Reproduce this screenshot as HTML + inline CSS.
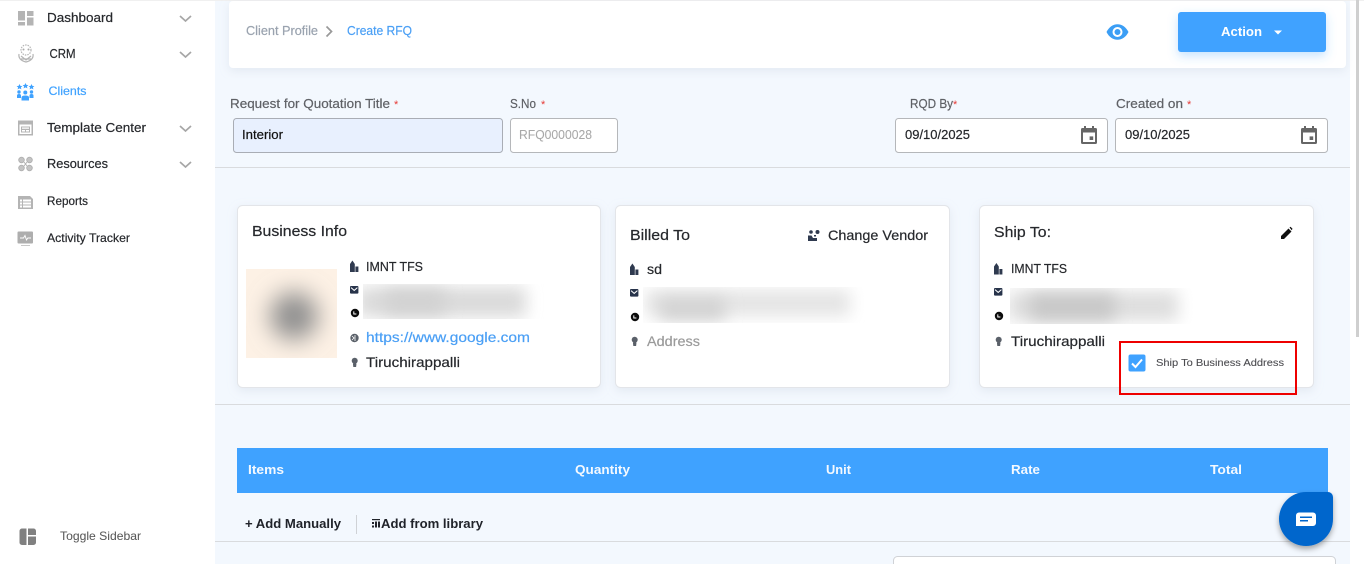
<!DOCTYPE html>
<html lang="en"><head><meta charset="utf-8"><title>Create RFQ</title>
<style>
html,body{margin:0;padding:0;width:1364px;height:564px;overflow:hidden;background:#fff}
svg{position:absolute;left:0;top:0;display:block}
text{font-family:"Liberation Sans",sans-serif;font-size:13px;color:#26282c;fill:currentColor;stroke:currentColor;stroke-width:.2px;white-space:pre}
.card{fill:#fff;stroke:#e3e5e9;stroke-width:1;filter:url(#sh)}
.inp{fill:#fff;stroke:#b5b7ba;stroke-width:1}
.lab{color:#5f6166;font-size:13px}
.st{color:#e53935;font-size:11px;stroke-width:0}
.th{color:#f4f9ff;font-weight:bold;font-size:13px;stroke-width:0}
</style></head><body>
<svg width="1364" height="564" viewBox="0 0 1364 564" xmlns="http://www.w3.org/2000/svg">
<defs>
<filter id="sh" x="-10%" y="-10%" width="120%" height="125%"><feDropShadow dx="0" dy="3" stdDeviation="5" flood-color="#a9b4c8" flood-opacity=".22"/></filter>
<filter id="shb" x="-10%" y="-30%" width="120%" height="170%"><feDropShadow dx="0" dy="4" stdDeviation="5" flood-color="#3fa2ff" flood-opacity=".3"/></filter>
<filter id="shc" x="-30%" y="-30%" width="160%" height="160%"><feDropShadow dx="0" dy="3" stdDeviation="3" flood-color="#000" flood-opacity=".35"/></filter>
<filter id="b6" x="-100%" y="-100%" width="300%" height="300%"><feGaussianBlur stdDeviation="12"/></filter>
<filter id="b7" x="-50%" y="-200%" width="200%" height="500%"><feGaussianBlur stdDeviation="8"/></filter>
<clipPath id="c1"><rect x="363" y="284" width="181" height="35"/></clipPath>
<clipPath id="c2"><rect x="643" y="287" width="222" height="36"/></clipPath>
<clipPath id="c3"><rect x="1010" y="288" width="183" height="36"/></clipPath>
<clipPath id="c4"><rect x="246" y="269" width="91" height="89"/></clipPath>
<g id="bld"><path d="M0 11.500V3.500L2.400 0 4.800 3.500V11.500ZM5.400 11.500V6H8.400V11.500Z" fill="#2f3a4f"/></g>
<g id="mail"><rect x="0" y="0" width="8.400" height="7.600" rx="1" fill="#27334a"/><path d="M1 1.600 4.200 4.400 7.400 1.600" stroke="#fff" stroke-width="1" fill="none"/></g>
<g id="ph"><circle cx="4" cy="4" r="4.200" fill="#0c0c0c"/><path d="M2.800 2.400V5H5.400" stroke="#fff" stroke-width="1" fill="none"/></g>
<g id="pin"><circle cx="3.200" cy="2.800" r="3" fill="#5a6069"/><path d="M1.400 5.500H5L4.600 9H1.800Z" fill="#5a6069"/></g>
<g id="cal"><path fill="#666" d="M3 0H5V2H11V0H13V2H14.500A1.500 1.500 0 0 1 16 3.500V16.500A1.500 1.500 0 0 1 14.500 18H1.500A1.500 1.500 0 0 1 0 16.500V3.500A1.500 1.500 0 0 1 1.500 2H3ZM2 6.500V16H14V6.500Z"/><rect x="8.600" y="10.400" width="3.600" height="3.600" fill="#666"/></g>
<path id="chev" d="M0 0 5.500 5 11 0" stroke="#a6a6a6" stroke-width="1.700" fill="none"/>
</defs>

<!-- main background -->
<rect x="215" y="0" width="1135" height="564" fill="#f3f8fe"/>
<rect x="0" y="0" width="1364" height="1" fill="#f0f0f0"/>
<rect x="1356" y="0" width="3" height="337" fill="#cfcfcf"/>

<!-- sidebar -->
<g>
<g fill="#b4b4b4"><rect x="18" y="11" width="7" height="9.500"/><rect x="27" y="11" width="6.500" height="5"/><rect x="18" y="22" width="7" height="3.500"/><rect x="27" y="17.500" width="6.500" height="8"/></g>
<text x="47" y="22" textLength="66" lengthAdjust="spacingAndGlyphs">Dashboard</text>
<use href="#chev" x="180" y="16"/>
<g fill="none" stroke="#b4b4b4" stroke-width="1.200"><circle cx="26" cy="50" r="5" stroke-dasharray="1.500 1"/><path d="M19 54Q18 60 26 62 34 60 33 54M21 56 26 60 31 56M21 59 31 59" /></g>
<circle cx="23.500" cy="49.500" r="1" fill="#aaa"/><circle cx="28.500" cy="49.500" r="1" fill="#aaa"/>
<text x="49.500" y="58" textLength="26" lengthAdjust="spacingAndGlyphs">CRM</text>
<use href="#chev" x="180" y="52"/>
<g fill="#3fa2ff"><path d="M19.500 84l.9 1.900 2 .2-1.500 1.300.5 2-1.900-1-1.900 1 .5-2-1.500-1.300 2-.2ZM25.500 83l.9 1.900 2 .2-1.500 1.300.5 2-1.900-1-1.900 1 .5-2-1.500-1.300 2-.2ZM31.500 84l.9 1.900 2 .2-1.500 1.300.5 2-1.900-1-1.900 1 .5-2-1.500-1.300 2-.2Z"/><circle cx="19" cy="92" r="1.700"/><circle cx="31.500" cy="92" r="1.700"/><circle cx="25.300" cy="92.500" r="2"/><path d="M17 98V95.500Q17 94 19 94T21 95.500V98ZM29.500 98V95.500Q29.500 94 31.500 94T33.500 95.500V98ZM21.500 100.500V97.500Q21.500 95.500 25.300 95.500T29 97.500V100.500Z"/></g>
<text x="48.500" y="95" textLength="38" lengthAdjust="spacingAndGlyphs" style="color:#3fa2ff;font-size:12px">Clients</text>
<path fill="#b4b4b4" fill-rule="evenodd" d="M18 120.500H33V135.500H18ZM19.500 124.500V134H31.500V124.500ZM21 126.500H30V132.500H21ZM22 127.500V128.800H29V127.500ZM22 130V131.500H25V130ZM26 130V131.500H29V130Z"/>
<text x="47" y="132" textLength="99" lengthAdjust="spacingAndGlyphs">Template Center</text>
<use href="#chev" x="180" y="126"/>
<g fill="#c4c4c4" stroke="#b0b0b0" stroke-width=".9"><circle cx="21.500" cy="160" r="2.800"/><circle cx="29.500" cy="160" r="2.800"/><circle cx="21.500" cy="168" r="2.800"/><circle cx="29.500" cy="168" r="2.800"/><path d="M24 162 27 166M27 162 24 166"/></g>
<text x="47" y="168" textLength="61" lengthAdjust="spacingAndGlyphs">Resources</text>
<use href="#chev" x="180" y="162"/>
<path fill="#b4b4b4" fill-rule="evenodd" d="M18 196H30L33 199V209H18ZM20 199.500V201.500H22V199.500ZM23 199.500V201.500H31V199.500ZM20 202.500V204.500H22V202.500ZM23 202.500V204.500H31V202.500ZM20 205.500V207.500H22V205.500ZM23 205.500V207.500H31V205.500Z"/>
<text x="47" y="205" textLength="41" lengthAdjust="spacingAndGlyphs" style="font-size:12px">Reports</text>
<rect x="17.500" y="231.500" width="15.500" height="12" rx="1" fill="#aeaeae"/><path d="M20 238H23.500L25 235.500 26.500 240 27.800 238H31" stroke="#fff" stroke-width=".9" fill="none"/><path d="M21 245.500H30" stroke="#c8c8c8" stroke-width="1"/>
<text x="47" y="242" textLength="83" lengthAdjust="spacingAndGlyphs" style="font-size:12px">Activity Tracker</text>
<path fill="#808080" d="M22 528.500H26.500V545H22A2.500 2.500 0 0 1 19.500 542.500V531A2.500 2.500 0 0 1 22 528.500ZM28 528.500H33.500A2.500 2.500 0 0 1 36 531V535H28ZM28 536.500H36V542.500A2.500 2.500 0 0 1 33.500 545H28Z"/>
<text x="60" y="540" textLength="81" lengthAdjust="spacingAndGlyphs" style="font-size:12px;color:#5a5a5a;stroke-width:.05px">Toggle Sidebar</text>
</g>

<!-- header card -->
<rect x="229" y="1" width="1117" height="67" rx="4" fill="#fff" filter="url(#sh)"/>
<text x="246" y="35" textLength="72" lengthAdjust="spacingAndGlyphs" style="color:#9aa3af">Client Profile</text>
<path d="M326.500 26.500 331.500 31.500 326.500 36.500" stroke="#999" stroke-width="1.700" fill="none"/>
<text x="347" y="35" textLength="65" lengthAdjust="spacingAndGlyphs" style="color:#4a9ff5">Create RFQ</text>
<path fill="#3b9ef5" fill-rule="evenodd" d="M1106.500 32C1109 27 1113 24.200 1117.500 24.200S1126 27 1128.500 32C1126 37 1122 39.800 1117.500 39.800S1109 37 1106.500 32ZM1117.500 27A5 5 0 1 0 1117.500 37 5 5 0 1 0 1117.500 27ZM1117.500 29A3 3 0 1 1 1117.500 35 3 3 0 1 1 1117.500 29Z"/>
<rect x="1178" y="12" width="148" height="40" rx="3" fill="#3fa2ff" filter="url(#shb)"/>
<text x="1221" y="36" textLength="41" lengthAdjust="spacingAndGlyphs" style="color:#fff;font-weight:bold;font-size:13px;stroke-width:0">Action</text>
<path d="M1274 30.500H1282L1278 34.500Z" fill="#fff"/>

<!-- form -->
<text class="lab" x="230" y="108" textLength="160" lengthAdjust="spacingAndGlyphs">Request for Quotation Title</text><text class="st" x="394" y="108">*</text>
<text class="lab" x="510" y="108" textLength="26" lengthAdjust="spacingAndGlyphs">S.No</text><text class="st" x="541" y="108">*</text>
<text class="lab" x="910" y="108" textLength="43" lengthAdjust="spacingAndGlyphs">RQD By</text><text class="st" x="953" y="108">*</text>
<text class="lab" x="1116" y="108" textLength="67" lengthAdjust="spacingAndGlyphs">Created on</text><text class="st" x="1187" y="108">*</text>
<rect x="233.500" y="118.500" width="269" height="34" rx="3" fill="#e8f0fe" stroke="#a9adb5"/>
<text x="242" y="139" textLength="41" lengthAdjust="spacingAndGlyphs" style="color:#111">Interior</text>
<rect class="inp" x="510.500" y="118.500" width="107" height="34" rx="3"/>
<text x="519" y="139" textLength="73" lengthAdjust="spacingAndGlyphs" style="color:#a8a8a8;stroke-width:.05px">RFQ0000028</text>
<rect class="inp" x="895.500" y="118.500" width="212" height="34" rx="3"/>
<text x="905" y="139" textLength="65" lengthAdjust="spacingAndGlyphs">09/10/2025</text>
<use href="#cal" x="1081" y="126"/>
<rect class="inp" x="1115.500" y="118.500" width="212" height="34" rx="3"/>
<text x="1125" y="139" textLength="65" lengthAdjust="spacingAndGlyphs">09/10/2025</text>
<use href="#cal" x="1301" y="126"/>
<rect x="215" y="167" width="1135" height="1" fill="#d9dbde"/>

<!-- card 1 -->
<rect class="card" x="237.500" y="205.500" width="363" height="182" rx="5"/>
<text x="252" y="236" textLength="95" lengthAdjust="spacingAndGlyphs" style="font-size:15px">Business Info</text>
<g clip-path="url(#c4)"><rect x="246" y="269" width="91" height="89" fill="#fdf1e5"/><circle cx="294" cy="316" r="24" fill="#8f8f8f" filter="url(#b6)"/></g>
<use href="#bld" x="350" y="260.500"/>
<text x="366" y="271" textLength="57" lengthAdjust="spacingAndGlyphs">IMNT TFS</text>
<use href="#mail" x="350" y="286"/>
<use href="#ph" x="351" y="309"/>
<g clip-path="url(#c1)"><rect x="363" y="284" width="181" height="35" fill="#fff"/><rect x="358" y="287" width="168" height="30" fill="#dadada" filter="url(#b7)"/><rect x="385" y="290" width="60" height="24" fill="#d2d2d2" filter="url(#b7)"/></g>
<circle cx="354.500" cy="338" r="4.200" fill="#5a6069"/><path d="M352 336 354 338 352 340M355 335V341" stroke="#fff" stroke-width=".8" fill="none"/>
<text x="366" y="342" textLength="164" lengthAdjust="spacingAndGlyphs" style="font-size:14px;color:#4a9ff5">https://www.google.com</text>
<use href="#pin" x="351.500" y="358"/>
<text x="366" y="367" textLength="94" lengthAdjust="spacingAndGlyphs" style="font-size:14px">Tiruchirappalli</text>

<!-- card 2 -->
<rect class="card" x="615.500" y="205.500" width="334" height="182" rx="5"/>
<text x="630" y="240" textLength="60" lengthAdjust="spacingAndGlyphs" style="font-size:15px">Billed To</text>
<g fill="#2f3a4f"><circle cx="811" cy="232" r="1.800"/><circle cx="817.500" cy="232" r="2"/><path d="M808 241V235.500H811.500L813 238H817V241Z"/><rect x="814" y="235" width="2" height="1.500"/></g>
<text x="828" y="240" textLength="100" lengthAdjust="spacingAndGlyphs" style="font-size:14px">Change Vendor</text>
<use href="#bld" x="630" y="263.500"/>
<text x="647" y="274" textLength="15" lengthAdjust="spacingAndGlyphs" style="font-size:14px">sd</text>
<use href="#mail" x="630" y="289"/>
<use href="#ph" x="631" y="313"/>
<g clip-path="url(#c2)"><rect x="643" y="287" width="222" height="36" fill="#fff"/><rect x="645" y="290" width="205" height="26" fill="#e4e4e4" filter="url(#b7)"/><rect x="660" y="298" width="65" height="22" fill="#d2d2d2" filter="url(#b7)"/></g>
<use href="#pin" x="631.500" y="337"/>
<text x="647" y="346" textLength="53" lengthAdjust="spacingAndGlyphs" style="font-size:14px;color:#9a9a9a">Address</text>

<!-- card 3 -->
<rect class="card" x="979.500" y="205.500" width="334" height="182" rx="5"/>
<text x="994" y="237" textLength="57" lengthAdjust="spacingAndGlyphs" style="font-size:15px">Ship To:</text>
<path d="M1281 239V236L1288.500 228.500 1291.500 231.500 1284 239ZM1289.500 227.500 1290.500 226.800 1292.500 228.800 1291.800 230.200Z" fill="#111"/>
<use href="#bld" x="994" y="263"/>
<text x="1011" y="273" textLength="56" lengthAdjust="spacingAndGlyphs">IMNT TFS</text>
<use href="#mail" x="994" y="288"/>
<use href="#ph" x="995" y="312"/>
<g clip-path="url(#c3)"><rect x="1010" y="288" width="183" height="36" fill="#fff"/><rect x="1008" y="291" width="170" height="30" fill="#dedede" filter="url(#b7)"/><rect x="1030" y="294" width="85" height="26" fill="#c8c8c8" filter="url(#b7)"/></g>
<use href="#pin" x="995.500" y="337"/>
<text x="1011" y="346" textLength="94" lengthAdjust="spacingAndGlyphs" style="font-size:14px">Tiruchirappalli</text>
<rect x="1120" y="342" width="176" height="52" fill="none" stroke="#ee0000" stroke-width="2"/>
<rect x="1128.500" y="354.500" width="17" height="17" rx="2" fill="#3fa2ff"/>
<path d="M1132 363.500 1135.500 367 1142 359.500" stroke="#fff" stroke-width="2" fill="none"/>
<text x="1156" y="366" textLength="128" lengthAdjust="spacingAndGlyphs" style="font-size:10.500px;color:#4c4c50;stroke-width:.1px">Ship To Business Address</text>

<rect x="215" y="404" width="1135" height="1" fill="#d9dbde"/>

<!-- table -->
<rect x="237" y="448" width="1091" height="45" fill="#3fa2ff"/>
<text class="th" x="248" y="474" textLength="36" lengthAdjust="spacingAndGlyphs">Items</text>
<text class="th" x="575" y="474" textLength="55" lengthAdjust="spacingAndGlyphs">Quantity</text>
<text class="th" x="826" y="474" textLength="25" lengthAdjust="spacingAndGlyphs">Unit</text>
<text class="th" x="1011" y="474" textLength="29" lengthAdjust="spacingAndGlyphs">Rate</text>
<text class="th" x="1210" y="474" textLength="32" lengthAdjust="spacingAndGlyphs">Total</text>
<text x="245" y="528" textLength="96" lengthAdjust="spacingAndGlyphs" style="font-weight:bold;color:#20232a;stroke-width:0">+ Add Manually</text>
<rect x="356" y="515" width="1" height="19" fill="#cfd2d6"/>
<g fill="#20232a"><rect x="372" y="519" width="8" height="1.200"/><rect x="372" y="522" width="2" height="2"/><rect x="375" y="521.500" width="2" height="6"/><rect x="378" y="521.500" width="2" height="6"/><rect x="372" y="525.500" width="2" height="2"/></g>
<text x="381" y="528" textLength="102" lengthAdjust="spacingAndGlyphs" style="font-weight:bold;color:#20232a;stroke-width:0">Add from library</text>
<rect x="215" y="541" width="1135" height="1" fill="#d9dbde"/>
<rect x="893.500" y="556.500" width="442" height="20" rx="4" fill="#fff" stroke="#d0d2d6"/>

<!-- chat -->
<path d="M1306 492H1328A5 5 0 0 1 1333 497V519A27 27 0 1 1 1306 492Z" fill="#0366cc" filter="url(#shc)"/>
<path fill="#fff" fill-rule="evenodd" d="M1299 512.500H1313A3 3 0 0 1 1316 515.500V523A3 3 0 0 1 1313 526H1296V515.500A3 3 0 0 1 1299 512.500ZM1300 516.500V518H1312V516.500ZM1300 520V521.500H1308V520Z"/>
</svg>
</body></html>
